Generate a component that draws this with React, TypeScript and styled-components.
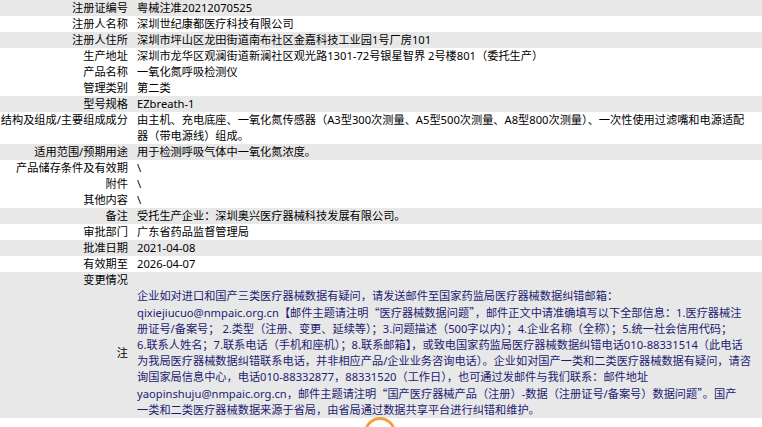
import React from "react";
import styled, { createGlobalStyle } from "styled-components";

const Global = createGlobalStyle`
  html, body {
    margin: 0;
    padding: 0;
    background: #ffffff;
    overflow: hidden;
  }
  body {
    font-family: "Noto Sans", "Noto Sans CJK SC", sans-serif;
    font-size: 11.2px;
    color: #000;
  }
`;

const Table = styled.div`
  display: flex;
  flex-direction: column;
  width: 762px;
`;

const Row = styled.div<{ $shade?: boolean; $center?: boolean }>`
  display: grid;
  grid-template-columns: 128px 1fr;
  column-gap: 9px;
  align-items: ${(p) => (p.$center ? "center" : "start")};
  background: ${(p) => (p.$shade ? "#e8e8e8" : "#ffffff")};
  line-height: 16px;
  min-height: 16px;
`;

const Label = styled.div`
  text-align: right;
  white-space: nowrap;
`;

const Value = styled.div<{ $note?: boolean }>`
  color: ${(p) => (p.$note ? "#1c1c72" : "#000")};
  white-space: nowrap;
`;

const Line = styled.span`
  display: block;
  white-space: nowrap;
`;

const Quote = styled.span`
  font-family: "Noto Sans CJK SC", sans-serif;
`;

const RingClip = styled.div`
  position: absolute;
  left: 362px;
  top: 417px;
  width: 36px;
  height: 10px;
  overflow: hidden;
`;

const Ring = styled.div`
  margin-left: 2px;
  width: 32px;
  height: 32px;
  border-radius: 50%;
  border: 3px solid #f2a23a;
  background: #fff;
  box-sizing: border-box;
`;

type Item = { label: string; lines: React.ReactNode[]; shade?: boolean; note?: boolean };

const Q = ({ children }: { children: React.ReactNode }) => (
  <>
    <Quote>“</Quote>
    {children}
    <Quote>”</Quote>
  </>
);

const items: Item[] = [
  { label: "注册证编号", lines: ["粤械注准20212070525"], shade: true },
  { label: "注册人名称", lines: ["深圳世纪康都医疗科技有限公司"] },
  { label: "注册人住所", lines: ["深圳市坪山区龙田街道南布社区金嘉科技工业园1号厂房101"], shade: true },
  { label: "生产地址", lines: ["深圳市龙华区观澜街道新澜社区观光路1301-72号银星智界 2号楼801（委托生产）"] },
  { label: "产品名称", lines: ["一氧化氮呼吸检测仪"] },
  { label: "管理类别", lines: ["第二类"] },
  { label: "型号规格", lines: ["EZbreath-1"], shade: true },
  {
    label: "结构及组成/主要组成成分",
    lines: [
      "由主机、充电底座、一氧化氮传感器（A3型300次测量、A5型500次测量、A8型800次测量）、一次性使用过滤嘴和电源适配",
      "器（带电源线）组成。",
    ],
  },
  { label: "适用范围/预期用途", lines: ["用于检测呼吸气体中一氧化氮浓度。"], shade: true },
  { label: "产品储存条件及有效期", lines: ["\\"] },
  { label: "附件", lines: ["\\"] },
  { label: "其他内容", lines: ["\\"] },
  { label: "备注", lines: ["受托生产企业：深圳奥兴医疗器械科技发展有限公司。"], shade: true },
  { label: "审批部门", lines: ["广东省药品监督管理局"] },
  { label: "批准日期", lines: ["2021-04-08"], shade: true },
  { label: "有效期至", lines: ["2026-04-07"] },
  { label: "变更情况", lines: [""], shade: true },
  {
    label: "注",
    shade: true,
    note: true,
    lines: [
      "企业如对进口和国产三类医疗器械数据有疑问，请发送邮件至国家药监局医疗器械数据纠错邮箱：",
      <>
        qixiejiucuo@nmpaic.org.cn【邮件主题请注明<Q>医疗器械数据问题</Q>，邮件正文中请准确填写以下全部信息：1.医疗器械注
      </>,
      "册证号/备案号； 2.类型（注册、变更、延续等）；3.问题描述（500字以内）；4.企业名称（全称）；5.统一社会信用代码；",
      "6.联系人姓名；7.联系电话（手机和座机）；8.联系邮箱】，或致电国家药监局医疗器械数据纠错电话010-88331514（此电话",
      "为我局医疗器械数据纠错联系电话，并非相应产品/企业业务咨询电话）。企业如对国产一类和二类医疗器械数据有疑问，请咨",
      "询国家局信息中心，电话010-88332877，88331520（工作日），也可通过发邮件与我们联系：邮件地址",
      <>
        yaopinshuju@nmpaic.org.cn，邮件主题请注明<Q>国产医疗器械产品（注册）-数据（注册证号/备案号）数据问题</Q>。国产
      </>,
      "一类和二类医疗器械数据来源于省局，由省局通过数据共享平台进行纠错和维护。",
    ],
  },
];

export default function App() {
  return (
    <>
      <Global />
      <Table>
        {items.map((it) => (
          <Row key={it.label} $shade={it.shade} $center={it.note}>
            <Label>{it.label}</Label>
            <Value $note={it.note}>
              {it.lines.map((l, i) => (
                <Line key={i}>{l === "" ? "\u00a0" : l}</Line>
              ))}
            </Value>
          </Row>
        ))}
      </Table>
      <RingClip>
        <Ring />
      </RingClip>
    </>
  );
}
